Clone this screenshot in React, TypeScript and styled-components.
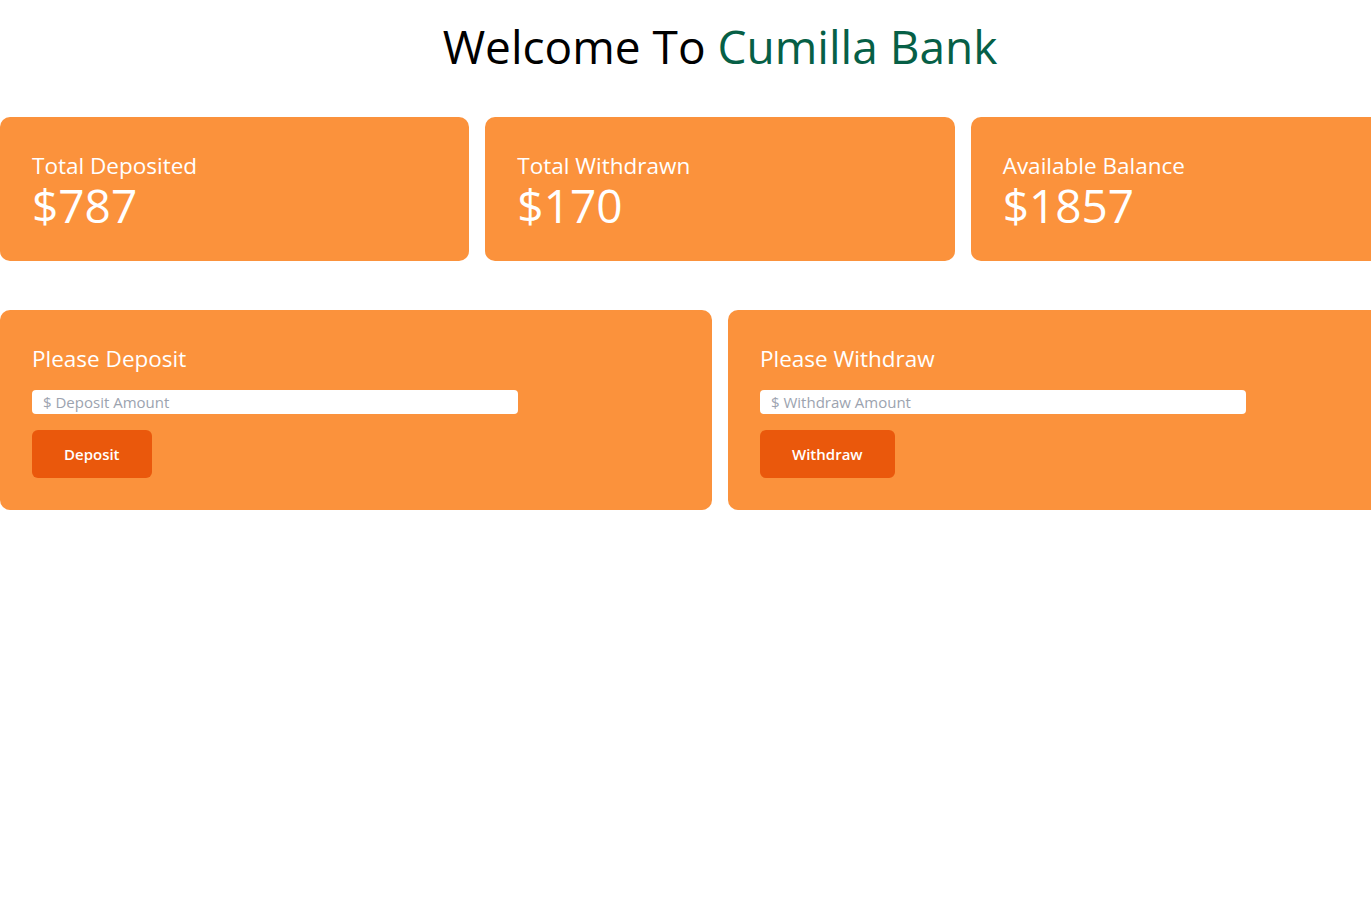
import React, { useState } from 'react';
import styled, { createGlobalStyle } from 'styled-components';

const GlobalStyle = createGlobalStyle`
  html, body {
    margin: 0;
    padding: 0;
    background: #ffffff;
    overflow-x: hidden;
  }
  body {
    font-family: 'Open Sans', 'Noto Sans', sans-serif;
  }
  * {
    box-sizing: border-box;
  }
`;

const Page = styled.div`
  width: 1440px;
`;

const Title = styled.h1`
  margin: 22px 0 47px;
  font-size: 46px;
  line-height: 48px;
  font-weight: 400;
  text-align: center;
  color: #000;
  span {
    color: #065f46;
  }
`;

const StatsRow = styled.div`
  display: grid;
  grid-template-columns: repeat(3, 1fr);
  gap: 16px;
`;

const FormsRow = styled.div`
  display: grid;
  grid-template-columns: repeat(2, 1fr);
  gap: 16px;
  margin-top: 49px;
`;

const Card = styled.div`
  background: #fb923c;
  border-radius: 10px;
  padding: 32px;
  color: #fff;
`;

const Label = styled.h3`
  margin: 0;
  padding-top: 1px;
  height: 32px;
  font-size: 22.5px;
  line-height: 32px;
  font-weight: 400;
`;

const Amount = styled.p`
  margin: 0;
  font-size: 46px;
  line-height: 48px;
  font-weight: 400;
`;

const AmountInput = styled.input`
  display: block;
  width: 75%;
  height: 24px;
  margin-top: 16px;
  padding: 0 11px;
  border: none;
  border-radius: 4px;
  background: #fff;
  font-family: inherit;
  font-size: 15px;
  color: #111;
  outline: none;
  &::placeholder {
    color: #9ca3af;
  }
`;

const ActionButton = styled.button`
  display: block;
  margin-top: 16px;
  height: 48px;
  padding: 0 32px;
  border: none;
  border-radius: 6px;
  background: #ea580c;
  color: #fff;
  font-family: inherit;
  font-size: 15px;
  font-weight: 600;
  cursor: pointer;
`;

type StatProps = { label: string; value: number };

const Stat = ({ label, value }: StatProps) => (
  <Card>
    <Label>{label}</Label>
    <Amount>${value}</Amount>
  </Card>
);

type FormProps = {
  title: string;
  placeholder: string;
  action: string;
  onSubmit: (n: number) => void;
};

const ActionForm = ({ title, placeholder, action, onSubmit }: FormProps) => {
  const [value, setValue] = useState('');
  return (
    <Card>
      <Label>{title}</Label>
      <AmountInput
        type="number"
        placeholder={placeholder}
        value={value}
        onChange={(e) => setValue(e.target.value)}
      />
      <ActionButton
        onClick={() => {
          const n = parseFloat(value);
          if (!isNaN(n) && n > 0) onSubmit(n);
          setValue('');
        }}
      >
        {action}
      </ActionButton>
    </Card>
  );
};

export default function App() {
  const [deposited, setDeposited] = useState(787);
  const [withdrawn, setWithdrawn] = useState(170);
  const [balance, setBalance] = useState(1857);

  return (
    <Page>
      <GlobalStyle />
      <Title>
        Welcome To <span>Cumilla Bank</span>
      </Title>
      <StatsRow>
        <Stat label="Total Deposited" value={deposited} />
        <Stat label="Total Withdrawn" value={withdrawn} />
        <Stat label="Available Balance" value={balance} />
      </StatsRow>
      <FormsRow>
        <ActionForm
          title="Please Deposit"
          placeholder="$ Deposit Amount"
          action="Deposit"
          onSubmit={(n) => {
            setDeposited((d) => d + n);
            setBalance((b) => b + n);
          }}
        />
        <ActionForm
          title="Please Withdraw"
          placeholder="$ Withdraw Amount"
          action="Withdraw"
          onSubmit={(n) => {
            setWithdrawn((w) => w + n);
            setBalance((b) => b - n);
          }}
        />
      </FormsRow>
    </Page>
  );
}
